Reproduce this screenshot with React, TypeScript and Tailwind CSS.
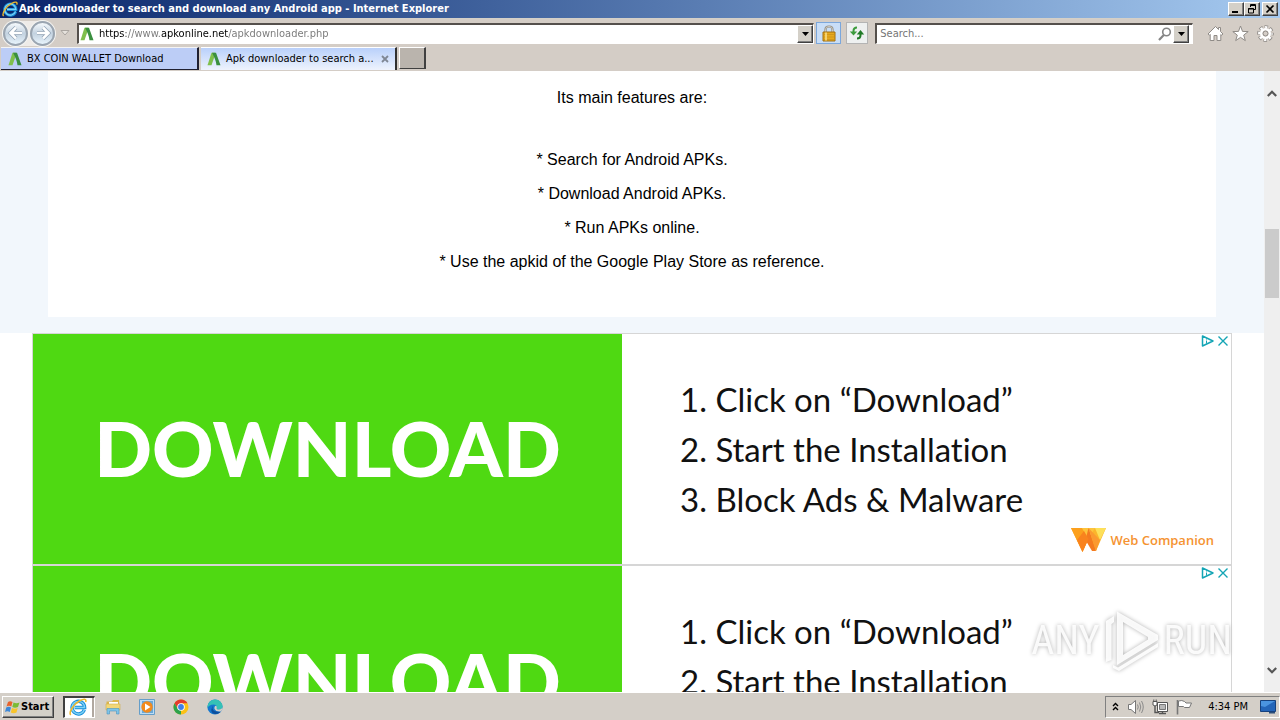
import type { ReactNode } from "react";

const raised =
  "border border-t-white border-l-white border-r-[#404040] border-b-[#404040] shadow-[inset_-1px_-1px_0_#808080] bg-[#d4d0c8]";

function IeLogo({ className }: { className: string }) {
  return (
    <svg viewBox="0 0 16 16" className={className} aria-hidden="true">
      <path d="M13.6 10.4A5.6 5.6 0 1 1 13.9 8.4H5" fill="none" stroke="#1a8fd8" strokeWidth="3" />
      <path d="M13.6 10.4A5.6 5.6 0 1 1 13.9 8.4H5" fill="none" stroke="#7fd3f7" strokeWidth="1.2" />
      <path d="M1.6 15C-.6 13 4 5.500 9.500 2.500C13 .6 15.800 .4 14.800 3.600" fill="none" stroke="#f0b92c" strokeWidth="1.400" />
    </svg>
  );
}

function SiteIcon() {
  return (
    <svg viewBox="0 0 14 14" className="size-3.5 shrink-0" aria-hidden="true">
      <path d="M4.500 .8H8L7 6L4.500 13.200H.5Z" fill="#7fbf4b" />
      <path d="M5 .8H9L13.500 13.200H9.500Q9 8 5 .8Z" fill="#3a8f3f" />
    </svg>
  );
}

function Arrow({ back, label }: { back?: boolean; label: string }) {
  return (
    <button
      aria-label={label}
      className="flex size-[25px] items-center justify-center rounded-full border-2 border-[#9aa5b1] bg-linear-to-b from-[#f6fafd] via-[#c3d2e0] to-[#e8f4fc] shadow-[0_0_0_1px_#f4f4f2]"
    >
      <svg viewBox="0 0 16 16" className="size-4" aria-hidden="true">
        <path
          d={back ? "M8 2.500L2.500 8L8 13.500M3 8H14" : "M8 2.500L13.500 8L8 13.500M13 8H2"}
          fill="none"
          stroke="#8fa1b3"
          strokeWidth="4"
        />
        <path
          d={back ? "M8 2.500L2.500 8L8 13.500M3 8H14" : "M8 2.500L13.500 8L8 13.500M13 8H2"}
          fill="none"
          stroke="#fff"
          strokeWidth="2.600"
        />
      </svg>
    </button>
  );
}

function DropButton({ label }: { label: string }) {
  return (
    <button aria-label={label} className={`flex h-[18px] w-4 shrink-0 items-center justify-center ${raised}`}>
      <svg viewBox="0 0 7 4" className="h-1 w-[7px]" aria-hidden="true">
        <path d="M0 0H7L3.500 4Z" fill="#000" />
      </svg>
    </button>
  );
}

function WindowButton({ label, children }: { label: string; children: ReactNode }) {
  return (
    <button aria-label={label} className={`flex h-3.5 w-4 items-center justify-center ${raised}`}>
      <svg viewBox="0 0 12 10" className="h-2.5 w-3" aria-hidden="true">
        {children}
      </svg>
    </button>
  );
}

function TitleBar() {
  return (
    <header className="flex h-[18px] shrink-0 items-center bg-linear-to-r from-[#0a246a] to-[#a6caf0] pr-0.5 pl-0.5">
      <IeLogo className="size-4 shrink-0" />
      <h1 className="ml-px flex-1 truncate font-['DejaVu_Sans_Condensed','Noto_Sans',sans-serif] text-[11px] leading-4 font-bold text-white">
        Apk downloader to search and download any Android app - Internet Explorer
      </h1>
      <div className="flex">
        <WindowButton label="Minimize">
          <path d="M2 8H8" stroke="#000" strokeWidth="2" />
        </WindowButton>
        <WindowButton label="Restore">
          <path d="M4.500 3V.5H9.500V5.500H8M4 1.500H10M2.500 4.500H7.500V9H2.500ZM2 5H8" fill="none" stroke="#000" />
        </WindowButton>
        <div className="w-0.5" />
        <WindowButton label="Close">
          <path d="M2.500 1.500L9.500 8.500M9.500 1.500L2.500 8.500" stroke="#000" strokeWidth="1.700" />
        </WindowButton>
      </div>
    </header>
  );
}

const sunken = "border border-t-2 border-l-2 border-t-[#55504c] border-l-[#55504c] border-r-white border-b-white bg-white";

function NavBar() {
  return (
    <nav className="flex h-[29px] shrink-0 items-center border-t border-[#d4d0c8] bg-[#d4cdc6] pr-1.5 pl-[3px]">
      <div className="flex gap-0.5 rounded-full bg-[#eeebe8]">
        <Arrow back label="Back" />
        <Arrow label="Forward" />
      </div>
      <button aria-label="Recent pages" className="mr-1.5 ml-1 flex h-5 w-3 items-center justify-center">
        <svg viewBox="0 0 10 6" className="h-1.5 w-2.5" aria-hidden="true">
          <path d="M1 .5H9L5 5Z" fill="#e6e2dd" stroke="#aaa5a0" />
        </svg>
      </button>
      <div className={`flex h-[21px] min-w-0 flex-1 items-center pl-px ${sunken}`}>
        <SiteIcon />
        <input
          aria-label="Address"
          defaultValue="https://www.apkonline.net/apkdownloader.php"
          className="ml-[5px] min-w-0 flex-1 bg-[linear-gradient(90deg,#000_0_27px,#777_27px_62px,#000_62px_129px,#777_129px)] bg-clip-text font-['DejaVu_Sans_Condensed','Noto_Sans',sans-serif] text-[11px] leading-4 text-transparent outline-none"
        />
        <DropButton label="Show address list" />
      </div>
      <button aria-label="Security report" className="ml-0.5 flex h-[22px] w-[25px] items-center justify-center border border-[#7ba7dc] bg-[#c9def7]">
        <svg viewBox="0 0 14 17" className="h-[17px] w-3.5" aria-hidden="true">
          <path d="M3.500 8V4.500Q3.500 1.500 7 1.500T10.500 4.500V8" fill="none" stroke="#8f8b80" strokeWidth="2.200" />
          <path d="M3.500 8V4.500Q3.500 1.500 7 1.500T10.500 4.500V8" fill="none" stroke="#dedbd2" strokeWidth=".8" />
          <path d="M1 7H13V16H1Z" fill="#e6a91f" stroke="#a06f13" />
          <path d="M1.500 9.500H12.500M1.500 12H12.500M1.500 14.500H12.500" stroke="#c98f1a" strokeWidth=".7" />
          <path d="M4 7.500V15.500" stroke="#fbe28c" strokeWidth="1.500" />
        </svg>
      </button>
      <button aria-label="Refresh" className="mr-[7px] ml-[5px] flex h-[22px] w-[22px] items-center justify-center border border-[#b4b4b4] bg-[#eef0f0]">
        <svg viewBox="0 0 16 14" className="h-3.5 w-4" aria-hidden="true">
          <path d="M8 1.500Q4.500 1.500 4.500 5V7" fill="none" stroke="#3c9b3c" strokeWidth="2" />
          <path d="M.8 5.500H8.200L4.500 9.500Z" fill="#3c9b3c" />
          <path d="M8 12.500Q11.500 12.500 11.500 9V7" fill="none" stroke="#207a26" strokeWidth="2" />
          <path d="M7.800 8.500H15.200L11.500 4Z" fill="#207a26" />
        </svg>
      </button>
      <div className={`flex h-[21px] w-[25%] shrink-0 items-center pr-[3px] pl-[3px] ${sunken}`}>
        <input
          aria-label="Search"
          placeholder="Search..."
          className="min-w-0 flex-1 font-['DejaVu_Sans_Condensed','Noto_Sans',sans-serif] text-[11px] leading-4 outline-none placeholder:text-[#757575]"
        />
        <button aria-label="Run search" className="mr-px">
          <svg viewBox="0 0 14 14" className="size-3.5" aria-hidden="true">
            <circle cx="8.500" cy="5" r="3.800" fill="none" stroke="#858585" strokeWidth="1.600" />
            <path d="M5.800 8L1 13" stroke="#858585" strokeWidth="2.200" />
          </svg>
        </button>
        <DropButton label="Search options" />
      </div>
      <div className="ml-3.5 flex gap-2">
        <button aria-label="Home">
          <svg viewBox="0 0 17 17" className="size-[17px]" aria-hidden="true">
            <path d="M8.500 1.500L11.500 4.500V2.500H13.500V6.500L16 9L14.500 10.200L13.800 9.500V15.500H10V10.500H7V15.500H3.200V9.500L2.500 10.200L1 9Z" fill="#fff" stroke="#8f8b87" />
          </svg>
        </button>
        <button aria-label="Favorites">
          <svg viewBox="0 0 17 17" className="size-[17px]" aria-hidden="true">
            <path d="M8.500 1L10.500 6.400L16.200 6.600L11.700 10.100L13.300 15.600L8.500 12.400L3.700 15.600L5.300 10.100L.8 6.600L6.500 6.400Z" fill="#fff" stroke="#8f8b87" />
          </svg>
        </button>
        <button aria-label="Tools">
          <svg viewBox="0 0 17 17" className="size-[17px]" aria-hidden="true">
            <circle cx="8.500" cy="8.500" r="6.500" fill="none" stroke="#8f8b87" strokeWidth="3.600" strokeDasharray="3.300 1.805" strokeDashoffset="1.650" />
            <circle cx="8.500" cy="8.500" r="6.200" fill="none" stroke="#fff" strokeWidth="2.400" strokeDasharray="2.300 2.570" strokeDashoffset="1.150" />
            <circle cx="8.500" cy="8.500" r="4.200" fill="none" stroke="#fff" strokeWidth="2.600" />
            <circle cx="8.500" cy="8.500" r="2.500" fill="#d4cdc6" stroke="#8f8b87" />
          </svg>
        </button>
      </div>
    </nav>
  );
}

function TabBar() {
  return (
    <div className="flex h-6 shrink-0 gap-0.5 border-b border-[#d4cdc6] bg-[#d4cdc6] pl-px font-['DejaVu_Sans_Condensed','Noto_Sans',sans-serif] text-[11px] leading-4">
      <a href="#wallet" className="flex h-full w-[198px] items-center border-t border-r-2 border-b border-t-[#f4f4f4] border-r-[#202030] border-b-[#202030] bg-[#bccdf6] pl-[7px]">
        <SiteIcon />
        <span className="ml-[5px]">BX COIN WALLET Download</span>
      </a>
      <div className="flex h-full w-[196px] items-center border-t border-r-2 border-t-white border-r-[#303030] bg-linear-to-b from-[#b9d0fa] to-[#eef3fd] pr-[3px] pl-1.5">
        <a href="#apk" className="flex min-w-0 flex-1 items-center">
          <SiteIcon />
          <span className="ml-[5px]">Apk downloader to search a...</span>
        </a>
        <button aria-label="Close tab" className="flex size-3.5 items-center justify-center">
          <svg viewBox="0 0 8 8" className="size-2" aria-hidden="true">
            <path d="M1 1L7 7M7 1L1 7" stroke="#7f8794" strokeWidth="1.800" />
          </svg>
        </button>
      </div>
      <button aria-label="New tab" className="h-[22px] w-[27px] border border-t-white border-l-white border-r-2 border-r-[#404040] border-b-[#404040] bg-[#bab4ad]" />
    </div>
  );
}

function Ad() {
  return (
    <article className="relative flex h-[232px] border border-[#d6d6d6] bg-white">
      <a href="#download" className="flex w-[589px] items-center justify-center bg-[#4fd912] pb-0.5 font-['Lato',sans-serif] text-[76px] leading-none font-black text-white">
        DOWNLOAD
      </a>
      <div className="flex flex-1 flex-col pt-10 pl-[58px] font-['Lato',sans-serif] text-[33px] leading-[50px] text-[#111] [font-variant-ligatures:none]">
        <p>1. Click on “Download”</p>
        <p>2. Start the Installation</p>
        <p>3. Block Ads &amp; Malware</p>
        <p className="mr-[17px] flex items-center justify-end gap-1 font-['Open_Sans',sans-serif] text-[13px] leading-8 font-semibold text-[#f59331]">
          <svg viewBox="0 0 35 24" className="h-6 w-[35px]" aria-hidden="true">
            <path d="M0 0H35L25 23L17.500 10L11.500 24Z" fill="#fbb52c" />
            <path d="M0 0H11L17.500 11L11.500 24Z" fill="#fca01d" />
            <path d="M11 0H24L17.500 11Z" fill="#fdc43c" />
            <path d="M24 0H35L29 12Z" fill="#fde05a" />
            <path d="M17.500 0L25 23H21L14.500 12Z" fill="#f47b20" />
            <path d="M17.500 0L29 12L25 23Z" fill="#fb9a30" />
            <path d="M6 12L11.500 24L17.500 11L13 3Z" fill="#f9831e" />
          </svg>
          Web Companion
        </p>
      </div>
      <div className="absolute top-px right-0.5 flex gap-0.5">
        <button aria-label="About this ad">
          <svg viewBox="0 0 14 12" className="h-3 w-3.5" aria-hidden="true">
            <path d="M1.500 1L12 6L1.500 11Z" fill="none" stroke="#14a5b5" strokeWidth="1.500" strokeLinejoin="round" />
            <path d="M5.500 3.500V4.500M5.500 5.500V8.500" stroke="#14a5b5" />
          </svg>
        </button>
        <button aria-label="Close ad">
          <svg viewBox="0 0 12 12" className="size-3" aria-hidden="true">
            <path d="M1.500 1.500L10.500 10.500M10.500 1.500L1.500 10.500" stroke="#14a5b5" strokeWidth="1.400" />
          </svg>
        </button>
      </div>
    </article>
  );
}

function ScrollBar() {
  return (
    <div className="flex w-4 shrink-0 flex-col items-center bg-[#efefef]">
      <button aria-label="Scroll up" className="flex h-11 w-full items-center justify-center">
        <svg viewBox="0 0 10 7" className="h-[7px] w-2.5" aria-hidden="true">
          <path d="M.8 6L5 1.800L9.200 6" fill="none" stroke="#555" strokeWidth="2.200" />
        </svg>
      </button>
      <div className="mt-[114px] h-[69px] w-3.5 bg-[#cbcbcb]" />
      <button aria-label="Scroll down" className="mt-auto flex h-11 w-full items-center justify-center">
        <svg viewBox="0 0 10 7" className="h-[7px] w-2.5" aria-hidden="true">
          <path d="M.8 1L5 5.200L9.200 1" fill="none" stroke="#555" strokeWidth="2.200" />
        </svg>
      </button>
    </div>
  );
}

function Watermark() {
  return (
    <div className="pointer-events-none absolute right-12 bottom-12 flex items-center gap-1 font-['Roboto_Condensed','Roboto',sans-serif] text-[40px] leading-none text-white/90 drop-shadow-[0_0_2px_#aaa]">
      <span>ANY</span>
      <svg viewBox="0 0 56 62" className="h-[62px] w-14" aria-hidden="true">
        <path
          fillRule="evenodd"
          d="M13 1.500L54 25V30L18 52L13 55ZM19 12V45L44 29.500V27Z"
          fill="#fff"
          fillOpacity=".9"
        />
        <path d="M2 11L10 6V12L7.500 14V50L2 52Z" fill="#fff" fillOpacity=".9" />
        <path d="M9 55L14 57.500L54 33V37L15 61L9 58Z" fill="#fff" fillOpacity=".9" />
      </svg>
      <span>RUN</span>
    </div>
  );
}

function Taskbar() {
  return (
    <footer className="flex h-7 shrink-0 items-center border-t border-white bg-[#d4cfc8] pl-0.5 font-['DejaVu_Sans_Condensed','Noto_Sans',sans-serif] text-[11px] leading-4">
      <button className={`flex h-[22px] w-[52px] items-center gap-px pl-0.5 font-bold ${raised}`}>
        <svg viewBox="0 0 15 14" className="h-3.5 w-[15px] shrink-0" aria-hidden="true">
          <path d="M3 2Q5 .5 7.500 2L6.300 6.500Q4 5 1.500 6.500Z" fill="#e9632b" />
          <path d="M8.500 2.500Q11.500 4 14.500 2.500L13 7Q10 8.500 7.300 7Z" fill="#7bbb35" />
          <path d="M1.200 7.500Q4 6 6 7.500L4.800 12Q2.500 10.500 0 12Z" fill="#3d88d8" />
          <path d="M7 8Q10 9.500 12.700 8L11.500 12.500Q8.500 14 5.800 12.500Z" fill="#f8c42b" />
        </svg>
        Start
      </button>
      <button aria-label="Internet Explorer" className="ml-[9px] flex h-[22px] w-8 items-center border border-t-2 border-l-2 border-t-[#404040] border-l-[#404040] border-r-white border-b-white bg-white pl-1">
        <IeLogo className="size-[18px]" />
        <span className="ml-auto h-full w-0.5 bg-[#b0a8a0]" />
      </button>
      <button aria-label="File Explorer" className="ml-2.5">
        <svg viewBox="0 0 16 16" className="size-4" aria-hidden="true">
          <path d="M1.500 2.500H7L8 1H14V9H1.500Z" fill="#dcb64c" />
          <path d="M4 3H13V9H4Z" fill="#fff" />
          <path d="M1 5H15V11H1Z" fill="#f3d777" stroke="#cfae52" strokeWidth=".6" />
          <path d="M2 15V9.500H14V15H11.500V12H4.500V15Z" fill="#7fc4e8" stroke="#4a95bf" strokeWidth=".6" />
        </svg>
      </button>
      <button aria-label="Media Player" className="ml-[17px]">
        <svg viewBox="0 0 18 18" className="size-[18px]" aria-hidden="true">
          <path d="M1.500 1.500H16.500V16.500H1.500Z" fill="#bcdcf4" stroke="#659ec9" />
          <path d="M4 3H15V15H4Z" fill="#6aa9d8" />
          <circle cx="9" cy="9" r="5.700" fill="#f28a1c" />
          <path d="M7 5.500L12.500 9L7 12.500Z" fill="#fff" />
        </svg>
      </button>
      <button aria-label="Chrome" className="ml-[17px]">
        <svg viewBox="0 0 16 16" className="size-4" aria-hidden="true">
          <circle cx="8" cy="8" r="7.500" fill="#fbc116" />
          <path d="M1.500 4.250A7.500 7.500 0 0 1 14.500 4.250H8L4.750 9.870Z" fill="#e33b2e" />
          <path d="M1.500 4.250L4.750 9.870L8 11.500L8 15.500A7.500 7.500 0 0 1 1.500 4.250Z" fill="#2ca24c" />
          <circle cx="8" cy="8" r="3.800" fill="#fff" />
          <circle cx="8" cy="8" r="2.900" fill="#3f7fe8" />
        </svg>
      </button>
      <button aria-label="Edge" className="ml-[18px]">
        <svg viewBox="0 0 16 16" className="size-4" aria-hidden="true">
          <circle cx="8" cy="8" r="7.600" fill="#1477cf" />
          <path d="M.5 7A7.600 7.600 0 0 1 15.600 7.500Q15.500 10.500 12 10.500Q9 10.500 9.800 8.500Q9.800 5.500 6.500 5.500Q2 5.500 .5 9Z" fill="#35c1b6" />
          <path d="M5.500 9.500Q6.500 13.500 13.800 12.700Q9 17 5 13.500Q3 10 6.500 6Q5.300 7.500 5.500 9.500Z" fill="#0d4f9c" />
          <path d="M9.800 8.500Q9 10.500 12 10.500Q14.500 10.500 15.600 8.300Q15.500 11 13.800 12.400Q9 13 7.500 10Q7 7 9 6.800Q10 7.500 9.800 8.500Z" fill="#d4cfc8" />
        </svg>
      </button>
      <div className="ml-auto flex h-[22px] items-center border border-t-[#808080] border-l-[#808080] border-r-white border-b-white pr-[3px] pl-1.5">
        <button aria-label="Show hidden icons">
          <svg viewBox="0 0 7 9" className="h-[9px] w-[7px]" aria-hidden="true">
            <path d="M1 4L3.500 1.500L6 4M1 8L3.500 5.500L6 8" fill="none" stroke="#000" strokeWidth="1.400" />
          </svg>
        </button>
        <button aria-label="Volume" className="ml-2">
          <svg viewBox="0 0 18 16" className="h-4 w-[18px]" aria-hidden="true">
            <path d="M1.500 5.500H4L8.500 1.500V14.500L4 10.500H1.500Z" fill="#fff" stroke="#777" />
            <path d="M10.500 5.500Q12 8 10.500 10.500M12.500 3.500Q15 8 12.500 12.500M14.500 2Q18 8 14.500 14" fill="none" stroke="#8a8a8a" />
          </svg>
        </button>
        <button aria-label="Network" className="ml-[7px]">
          <svg viewBox="0 0 17 16" className="h-4 w-[17px]" aria-hidden="true">
            <path d="M5.500 3.500H15.500V12.500H5.500Z" fill="#fff" stroke="#555" />
            <path d="M7.500 5.500H13.500V10.500H7.500Z" fill="#b8b8b8" stroke="#777" />
            <path d="M7 14.500H14M10.500 12.500V14.500M3 6V13.500H7" fill="none" stroke="#555" strokeWidth="1.400" />
            <path d="M1 2.500H5V6Q3 8 1 6ZM1.800 .5V2.500M4.200 .5V2.500" fill="#fff" stroke="#555" />
          </svg>
        </button>
        <button aria-label="Action Center" className="ml-[7px]">
          <svg viewBox="0 0 17 16" className="h-4 w-[17px]" aria-hidden="true">
            <path d="M1.500 1V15.500" stroke="#777" strokeWidth="1.600" />
            <path d="M2.500 2Q6 .8 8.500 2.500L10 4H15.500L13.500 8.500H8.500L7.500 7.500H2.500Z" fill="#fff" stroke="#777" />
          </svg>
        </button>
        <time className="mr-3 ml-[15px] whitespace-nowrap">4:34 PM</time>
        <button aria-label="Show desktop">
          <svg viewBox="0 0 16 14" className="h-3.5 w-4" aria-hidden="true">
            <path d="M.5 .5H15.500V11.500H.5Z" fill="#2465b8" stroke="#16417d" />
            <path d="M1 1H15L5 7L1 6Z" fill="#4b94df" />
            <path d="M9 12H15V13.500H9Z" fill="#2b4d78" />
          </svg>
        </button>
      </div>
    </footer>
  );
}

export default function App() {
  return (
    <div className="flex h-screen flex-col overflow-hidden bg-white text-black">
      <TitleBar />
      <NavBar />
      <TabBar />
      <div className="flex min-h-0 flex-1">
        <main className="min-w-0 flex-1 overflow-hidden">
          <div className="bg-[#f2f7fc] px-12 pb-4">
            <section className="flex flex-col items-center gap-4 bg-white pt-[18px] pb-[46px] text-center font-['Liberation_Sans',sans-serif] text-base leading-[18px]">
              <p className="mb-7">Its main features are:</p>
              <p>* Search for Android APKs.</p>
              <p>* Download Android APKs.</p>
              <p>* Run APKs online.</p>
              <p>* Use the apkid of the Google Play Store as reference.</p>
            </section>
          </div>
          <div className="px-8">
            <Ad />
            <Ad />
          </div>
        </main>
        <ScrollBar />
      </div>
      <Taskbar />
      <Watermark />
    </div>
  );
}
